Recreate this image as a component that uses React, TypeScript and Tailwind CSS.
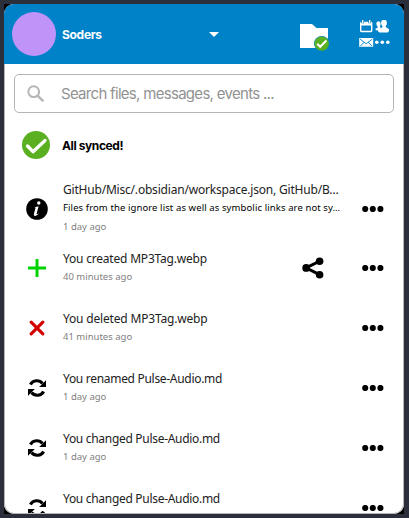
import React from "react";

type Kind = "info" | "add" | "remove" | "sync";

interface Activity {
  kind: Kind;
  title: string;
  titleClass: string;
  detail?: string;
  time: string;
  shared?: boolean;
}

const activities: Activity[] = [
  {
    kind: "info",
    title: "GitHub/Misc/.obsidian/workspace.json, GitHub/B…",
    titleClass: "tracking-[-0.2px]",
    detail: "Files from the ignore list as well as symbolic links are not sy…",
    time: "1 day ago",
  },
  { kind: "add", title: "You created MP3Tag.webp", titleClass: "tracking-[-0.2px]", time: "40 minutes ago", shared: true },
  { kind: "remove", title: "You deleted MP3Tag.webp", titleClass: "tracking-[-0.18px]", time: "41 minutes ago" },
  { kind: "sync", title: "You renamed Pulse-Audio.md", titleClass: "tracking-[-0.3px]", time: "1 day ago" },
  { kind: "sync", title: "You changed Pulse-Audio.md", titleClass: "tracking-[-0.3px]", time: "1 day ago" },
  { kind: "sync", title: "You changed Pulse-Audio.md", titleClass: "tracking-[-0.3px]", time: "1 day ago" },
];

function KindIcon({ kind }: { kind: Kind }) {
  if (kind === "info")
    return (
      <svg viewBox="0 0 22 22" className="size-[22px]">
        <circle cx="11" cy="11" r="10.8" />
        <circle cx="12.8" cy="5" r="1.7" fill="#fff" />
        <path d="M8 9.7q2.6-1.4 4.6-1.3l-2 7.4q-.3 1.3 2.6-.5-2.6 3-4.4 2.7-1.4-.4-.8-2.5l1.5-5.4q.2-1-1.5-.4z" fill="#fff" />
      </svg>
    );
  if (kind === "add")
    return (
      <svg viewBox="0 0 18 18" className="size-[18px]">
        <path d="M9 0v18M0 9h18" stroke="#00d400" strokeWidth="3" />
      </svg>
    );
  if (kind === "remove")
    return (
      <svg viewBox="0 0 16 16" className="size-4">
        <path d="m2.2 2.2 11.6 11.6M13.8 2.2 2.2 13.8" stroke="#d40000" strokeWidth="3.2" strokeLinecap="round" />
      </svg>
    );
  return (
    <svg viewBox="0 0 18 18" className="size-[18px]">
      <path d="M2.4 5.6C5 .8 11.3.6 14.5 4.4M15.6 12.4C13 17.2 6.7 17.4 3.5 13.6" fill="none" stroke="#000" strokeWidth="3.1" />
      <path d="M18 1.3V8h-6.8zM0 16.7V10h6.8z" />
    </svg>
  );
}

function ShareIcon() {
  return (
    <svg viewBox="0 0 22 22" className="size-[22px]">
      <path d="M18 4 4 10.8 18 17.8" fill="none" stroke="#000" strokeWidth="3" />
      <circle cx="4.2" cy="10.9" r="3.9" />
      <circle cx="17.6" cy="4.2" r="3.8" />
      <circle cx="17.6" cy="17.7" r="3.8" />
    </svg>
  );
}

function Dots() {
  return (
    <svg viewBox="0 0 22 6" className="h-1.5 w-[22px]">
      <circle cx="3.2" cy="3" r="3.1" />
      <circle cx="10.8" cy="3" r="3.1" />
      <circle cx="18.4" cy="3" r="3.1" />
    </svg>
  );
}

function FolderButton() {
  return (
    <svg viewBox="0 0 30 28" className="h-7 w-[30px]">
      <path d="M0 0h12l4.5 4H28v20H0z" fill="#fff" />
      <circle cx="21.7" cy="19.6" r="7.7" fill="#0082c9" />
      <circle cx="21.7" cy="19.6" r="7.2" fill="#5ab021" />
      <path d="m17.2 19.8 3 3 6.2-6.3" fill="none" stroke="#fff" strokeWidth="2" />
    </svg>
  );
}

function AppsButton() {
  return (
    <svg viewBox="0 0 32 28" className="h-7 w-8" fill="#fff">
      <path d="M2.4 1.8H12q1.4 0 1.4 1.4v7.6q0 1.4-1.4 1.4H2.4q-1.4 0-1.4-1.4V3.2q0-1.4 1.4-1.4zM2.4 5.6v5.2H12V5.6z" />
      <path d="M3.7.2v3M10.7.2v3" stroke="#0082c9" strokeWidth="2.8" />
      <path d="M3.7 0v3M10.7 0v3" stroke="#fff" strokeWidth="1.3" />
      <ellipse cx="19.5" cy="3.8" rx="2.2" ry="2.5" />
      <path d="M18.5 5.5h2.5l.6 3-1 1.8h-4V8.7l2-1z" />
      <ellipse cx="25" cy="3" rx="2.9" ry="3.3" />
      <path d="M23.4 5h3.3v2l3.4 2.3q.5 2.4-1.5 3.1h-8.2q-2.2-.8-1.6-3L23.4 7.2z" />
      <path d="M.2 18h14v8.7H.2z" />
      <path d="m1 19 6.2 4.8 6.2-4.8M1.4 26l4-4M13 26l-4-4" fill="none" stroke="#0082c9" strokeWidth=".9" />
      <circle cx="17.8" cy="22.2" r="1.8" />
      <circle cx="23.3" cy="22.2" r="1.8" />
      <circle cx="28.8" cy="22.2" r="1.8" />
    </svg>
  );
}

function ActivityRow({ item }: { item: Activity }) {
  return (
    <li className={`flex shrink-0 ${item.detail ? "h-[59px]" : "h-[60px]"}`}>
      <div className="flex w-[58px] shrink-0 items-center justify-center pl-1.5">
        <KindIcon kind={item.kind} />
      </div>
      <div className={`w-[281px] whitespace-nowrap font-['Noto_Sans','Open_Sans',sans-serif] ${item.detail ? "pt-[3px]" : "pt-[13px]"}`}>
        <p className={`h-4 text-[12px] leading-4 text-[#222] ${item.titleClass}`}>{item.title}</p>
        {item.detail && (
          <p className="mt-0.5 h-4 text-[9.5px] leading-4 tracking-[0.1px] text-black">{item.detail}</p>
        )}
        <p className={`h-4 text-[9.5px] leading-4 text-[#808080] ${item.detail ? "mt-[3px]" : "mt-0.5"}`}>{item.time}</p>
      </div>
      <div className="-ml-[43px] flex w-[104px] items-center justify-between pl-[3px] pr-[19px]">
        <span className="w-[22px]">{item.shared && <ShareIcon />}</span>
        <Dots />
      </div>
    </li>
  );
}

export default function App() {
  return (
    <div className="h-[518px] w-[409px] bg-[#2b2e3b] p-1 font-['Inter',sans-serif]">
      <div className="h-[510px] w-[400px] bg-black">
        <main className="flex h-[510px] w-[400px] flex-col overflow-hidden rounded-[10px] bg-white shadow-[inset_0_0_0_1px_#b5b5b5]">
          <header className="flex h-[60px] shrink-0 items-center bg-[#0082c9] pl-2">
            <div className="size-11 rounded-full bg-[#bf93f8]" />
            <span className="ml-1.5 mt-0.5 w-[147px] text-[12px] font-bold tracking-[-0.3px] text-white">Soders</span>
            <svg viewBox="0 0 10 5" className="h-[5px] w-2.5" fill="#fff">
              <path d="M0 0h10L5 5z" />
            </svg>
            <div className="ml-[81px] mt-2">
              <FolderButton />
            </div>
            <div className="ml-[29px]">
              <AppsButton />
            </div>
          </header>
          <label className="mx-2.5 mt-2.5 flex h-[39px] shrink-0 items-center rounded-[5px] border border-[#b5b5b5] pl-3">
            <svg viewBox="0 0 18 18" className="size-[18px]" fill="none" stroke="#b5b5b5" strokeWidth="2">
              <circle cx="6.7" cy="6.7" r="5.4" />
              <path d="m10.6 10.6 5.8 5.8" strokeWidth="2.4" />
            </svg>
            <span className="ml-4 mt-0.5 text-[15px] tracking-[-0.7px] text-[#929292]">Search files, messages, events ...</span>
          </label>
          <div className="mt-[17px] flex h-[30px] shrink-0 items-center pl-[18px]">
            <svg viewBox="0 0 28 28" className="size-7">
              <circle cx="14" cy="14" r="14" fill="#5ab021" />
              <path d="m5.5 15 5.5 5.7L23 9.5" fill="none" stroke="#fff" strokeWidth="3.3" strokeLinecap="round" strokeLinejoin="round" />
            </svg>
            <span className="ml-3 mt-0.5 text-[12px] font-bold tracking-[-0.4px] text-black">All synced!</span>
          </div>
          <ul className="mx-px mb-px mt-[19px] flex min-h-0 flex-1 flex-col overflow-hidden rounded-b-[9px] pl-0">
            {activities.map((item, i) => (
              <ActivityRow key={i} item={item} />
            ))}
          </ul>
        </main>
      </div>
    </div>
  );
}
